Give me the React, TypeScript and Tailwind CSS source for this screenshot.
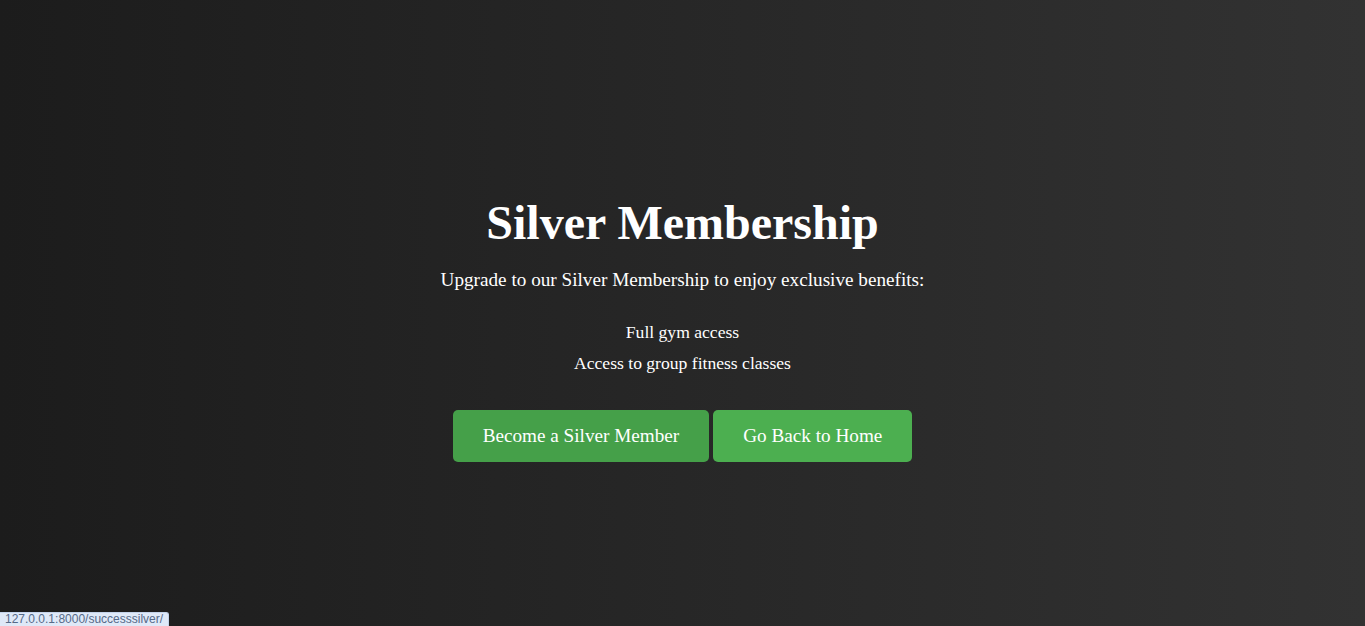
import React from "react";

const App: React.FC = () => {
  return (
    <div className="relative min-h-screen w-full overflow-hidden bg-[linear-gradient(to_right,#1c1c1c,#323232)] font-['Liberation_Serif','Times_New_Roman',serif] text-white">
      <div className="flex flex-col items-center pt-[195px] text-center">
        <h1 className="text-[48px] font-bold leading-[55px]">Silver Membership</h1>
        <p className="mt-[19px] text-[19.2px] leading-[22px]">
          Upgrade to our Silver Membership to enjoy exclusive benefits:
        </p>
        <ul className="mt-[31px] flex flex-col gap-[11px] text-[17.6px] leading-[20px]">
          <li>Full gym access</li>
          <li>Access to group fitness classes</li>
        </ul>
        <div className="mt-[37px] flex gap-1">
          <button className="h-[52px] rounded-[5px] bg-[#45a049] px-[30px] text-[19.2px] text-white">
            Become a Silver Member
          </button>
          <button className="h-[52px] rounded-[5px] bg-[#4caf50] px-[30px] text-[19.2px] text-white">
            Go Back to Home
          </button>
        </div>
      </div>

      {/* browser status bubble */}
      <div className="absolute bottom-0 left-0 h-[14px] rounded-tr-[3px] border-t border-r border-[#c4d3ea] bg-[#dfe9f8] pl-[5px] pr-[5px] font-['Liberation_Sans',Arial,sans-serif] text-[12px] leading-[13px] text-[#566a88]">
        127.0.0.1:8000/successsilver/
      </div>
    </div>
  );
};

export default App;
